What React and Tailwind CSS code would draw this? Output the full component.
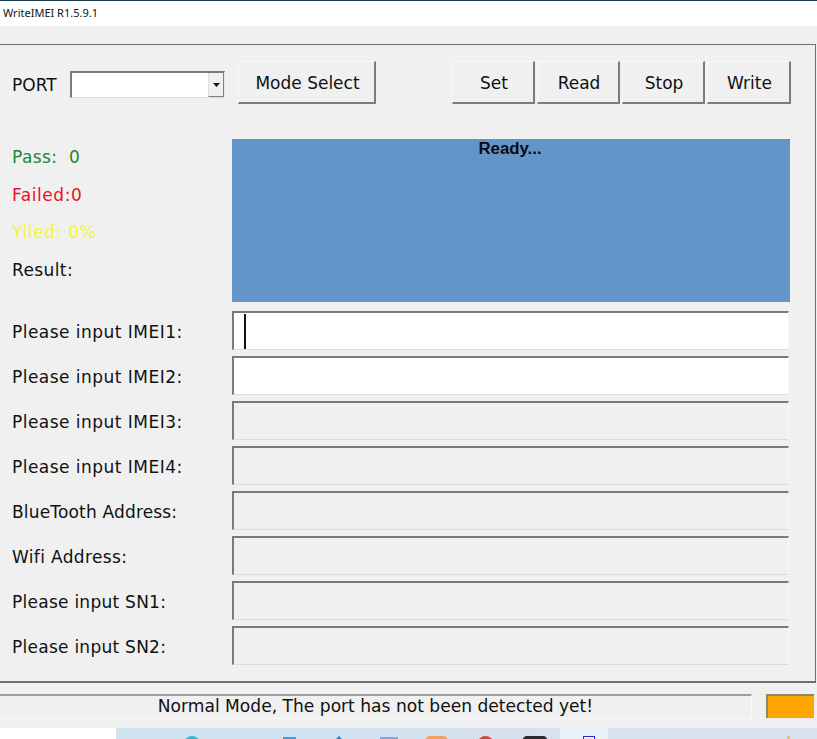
const SANS = "font-['DejaVu_Sans','Liberation_Sans',sans-serif]";

function Btn({ w, children }) {
  return (
    <button className={`h-[43px] ${w} bg-[#f0f0f0] border border-[#f8f8f8] border-r-2 border-b-2 border-r-[#7c7c7c] border-b-[#7c7c7c] text-[17px] text-[#111] flex items-center justify-center pt-[3px] pl-[2px]`}>
      {children}
    </button>
  );
}

function Stat({ color, children }) {
  return <div className={`h-[37.5px] flex items-center text-[17px] whitespace-pre ${color}`}>{children}</div>;
}

const rows = [
  ["Please input IMEI1:", true, true, "tracking-[0.47px]"],
  ["Please input IMEI2:", true, false, "tracking-[0.47px]"],
  ["Please input IMEI3:", false, false, "tracking-[0.47px]"],
  ["Please input IMEI4:", false, false, "tracking-[0.47px]"],
  ["BlueTooth Address:", false, false, "tracking-[0.17px]"],
  ["Wifi Address:", false, false, "tracking-[0.35px]"],
  ["Please input SN1:", false, false, "tracking-[0.26px]"],
  ["Please input SN2:", false, false, "tracking-[0.26px]"],
];

function Row({ label, on, caret, track }) {
  return (
    <div className="flex items-center h-[39px] mb-[6px]">
      <div className={`w-[232px] pl-[12px] pt-[5px] text-[17px] text-[#111] ${track}`}>{label}</div>
      <div className={`flex-1 h-[39px] mr-[26px] border-2 border-r border-b border-t-[#7a7a7a] border-l-[#7a7a7a] border-r-[#f8f8f8] border-b-[#dcdcdc] flex items-center ${on ? "bg-white" : "bg-[#f0f0f0]"}`}>
        {caret && <div className="ml-[10px] w-[2px] h-[35px] bg-[#111]" />}
      </div>
    </div>
  );
}

export default function App() {
  return (
    <div className={`w-[817px] h-[739px] overflow-hidden flex flex-col bg-[#f0f0f0] ${SANS}`}>
      <div className="h-[1px] bg-[#1d3a4e]" />
      <div className="h-[25px] bg-white pl-[3px] pt-[4px] text-[11px] leading-[16px] text-[#111] font-['Noto_Sans',sans-serif]">WriteIMEI R1.5.9.1</div>
      <div className="h-[18px]" />

      <div className="h-[639px] w-[816px] border border-l-0 border-[#6e6e6e] border-b-2 flex flex-col">
        <div className="h-[94px] flex items-start pt-[16px]">
          <div className="w-[58px] pl-[12px] h-[45px] pt-[5px] flex items-center text-[17px] text-[#111]">PORT</div>
          <div className="ml-[12px] mt-[10px] w-[155px] h-[27px] border-2 border-r border-b border-t-[#7a7a7a] border-l-[#7a7a7a] border-r-[#e8e8e8] border-b-[#dcdcdc] bg-white flex justify-end">
            <div className="w-[16px] h-full bg-[#f0f0f0] border-l border-[#e0e0e0] border-r border-r-[#808080] border-b border-b-[#808080] flex items-center justify-center">
              <svg width="7" height="4" viewBox="0 0 7 4"><path d="M0 0h7L3.5 4z" fill="#111" /></svg>
            </div>
          </div>
          <div className="ml-[13px]"><Btn w="w-[138px]">Mode Select</Btn></div>
          <div className="ml-[76px] flex gap-[2px]">
            <Btn w="w-[83px]">Set</Btn>
            <Btn w="w-[83px]">Read</Btn>
            <Btn w="w-[83px]">Stop</Btn>
            <Btn w="w-[84px]">Write</Btn>
          </div>
        </div>

        <div className="flex h-[163px] mb-[9px]">
          <div className="w-[232px] pl-[12px]">
            <Stat color="text-[#1b8a2a] tracking-[0.4px]">{"Pass:  0"}</Stat>
            <Stat color="text-[#e5141e] tracking-[0.55px]">Failed:0</Stat>
            <Stat color="text-[#f5f53c] tracking-[0.65px]">{"Yiled: 0%"}</Stat>
            <Stat color="text-[#111] tracking-[0.4px]">Result:</Stat>
          </div>
          <div className="w-[558px] bg-[#6495c8] text-center text-[16.8px] leading-[19px] font-bold text-[#0a0a14] font-['Liberation_Sans',sans-serif]">
            <span className="relative -left-[1px]">Ready...</span>
          </div>
        </div>

        <div className="flex flex-col">
          {rows.map(([label, on, caret, track]) => (
            <Row key={label} label={label} on={on} caret={caret} track={track} />
          ))}
        </div>
      </div>

      <div className="h-[11px]" />
      <div className="h-[25px] flex">
        <div className="w-[752px] border-t-2 border-t-[#a0a0a0] border-b border-b-[#fafafa] border-r border-r-[#fafafa] flex items-center justify-center text-[17.1px] text-[#111]">
          Normal Mode, The port has not been detected yet!
        </div>
        <div className="ml-[14px] w-[48px] h-[24px] bg-[#ffa500] border-2 border-r-0 border-b-0 border-[#8a8a6a]" />
      </div>
      <div className="h-[9px]" />

      <div className="flex-1 flex overflow-hidden">
        <div className="w-[116px] bg-white" />
        <div className="relative flex-1 bg-[linear-gradient(90deg,#cfe3ee,#d6e2ee_60%,#d8e2ee)]">
          <div className="absolute left-[67px] top-[8px] w-[18px] h-[18px] rounded-full bg-[#2fb8c0]" />
          <div className="absolute left-[167px] top-[9px] w-[13px] h-[6px] bg-[#3f9ae0]" />
          <div className="absolute left-[217px] top-[8px] w-0 h-0 border-x-[6px] border-x-transparent border-b-[6px] border-b-[#2e7fc4]" />
          <div className="absolute left-[264px] top-[9px] w-[18px] h-[6px] bg-[#8ea0d8]" />
          <div className="absolute left-[309px] top-[8px] w-[23px] h-[8px] rounded-t-[5px] bg-[#f0a060]" />
          <div className="absolute left-[361px] top-[8px] w-[17px] h-[17px] rounded-full bg-[#d8433a]" />
          <div className="absolute left-[407px] top-[8px] w-[24px] h-[8px] rounded-t-[4px] bg-[#2a2a30]" />
          <div className="absolute left-[444px] top-0 w-[48px] h-full bg-[#eaf1f8]" />
          <div className="absolute left-[467px] top-[8px] w-[12px] h-[5px] border border-[#2a2ad0]" />
          <div className="absolute right-[27px] top-[8px] w-[3px] h-[6px] bg-[#e8c070]" />
        </div>
      </div>
    </div>
  );
}
